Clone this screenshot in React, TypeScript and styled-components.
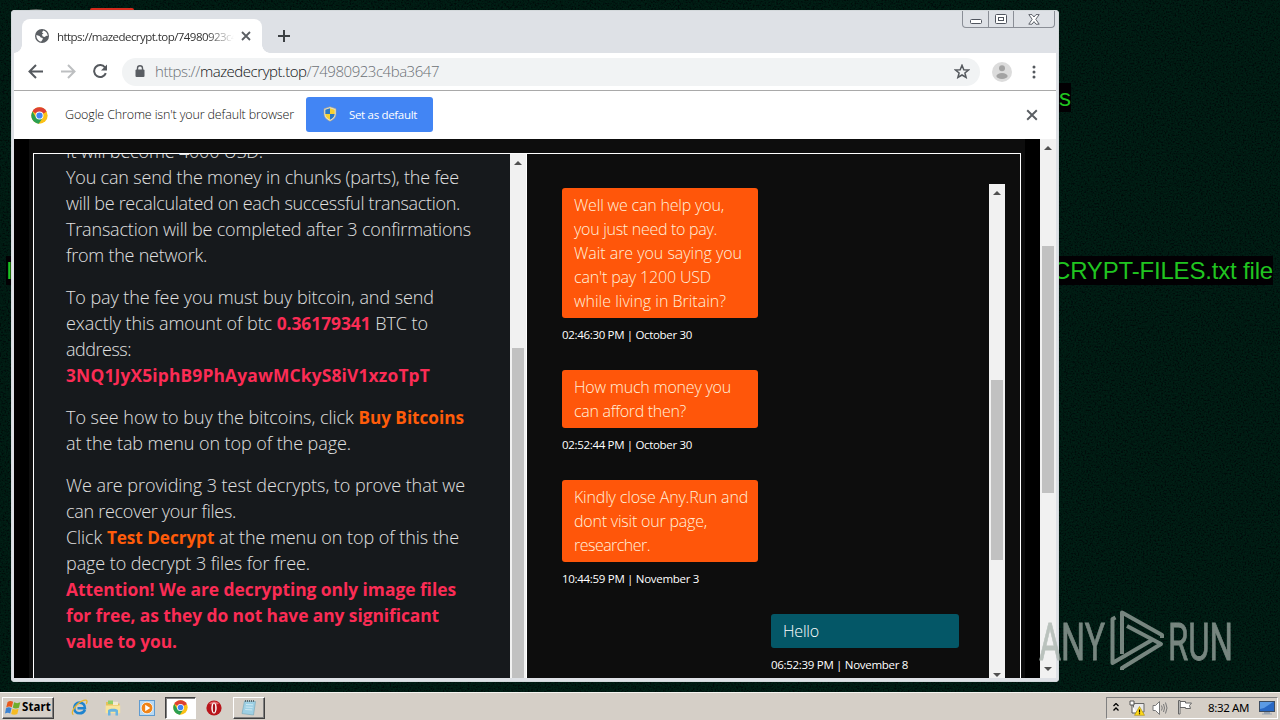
import { Fragment, useLayoutEffect, useRef, useState } from 'react'
import type { ReactNode } from 'react'
import styled, { createGlobalStyle, css } from 'styled-components'

const GlobalStyle = createGlobalStyle`
  * {
    box-sizing: border-box;
  }

  body {
    margin: 0;
    overflow: hidden;
    font-family: 'Open Sans', 'Noto Sans', sans-serif;
  }
`

const Desktop = styled.div`
  position: relative;
  display: flex;
  flex-direction: column;
  justify-content: flex-end;
  width: 1280px;
  height: 720px;
  overflow: hidden;
  background: #010f09;
`

const Grain = styled.svg`
  position: absolute;
  inset: 0;
  opacity: 0.09;
`

const Wallpaper = styled.div<{ $x: number; $y: number; $h: number }>`
  position: absolute;
  left: ${(p) => p.$x}px;
  top: ${(p) => p.$y}px;
  height: ${(p) => p.$h}px;
  line-height: ${(p) => p.$h}px;
  background: #020003;
  color: #20c420;
  font-family: 'Liberation Sans', Arial, sans-serif;
  font-size: 24px;
  white-space: nowrap;
`

const DesktopIcon = styled.div<{ $x: number; $y: number; $w: number; $color: string; $round?: boolean }>`
  position: absolute;
  left: ${(p) => p.$x}px;
  top: ${(p) => p.$y}px;
  width: ${(p) => p.$w}px;
  height: 16px;
  border-radius: ${(p) => (p.$round ? '50%' : '2px')};
  background: ${(p) => p.$color};
`

const Window = styled.div`
  position: absolute;
  left: 11px;
  top: 10px;
  display: flex;
  flex-direction: column;
  width: 1048px;
  height: 672px;
  padding: 1px 3px 4px;
  border-radius: 4px;
  background: #dee1e6;
  box-shadow: inset 0 0 0 1px #d3d8db;
`

const TabStrip = styled.div`
  display: flex;
  height: 42px;
  padding: 8px 0 0 8px;
`

const Tab = styled.div`
  position: relative;
  display: flex;
  align-items: center;
  width: 240px;
  height: 34px;
  padding: 0 11px 0 13px;
  border-radius: 8px 8px 0 0;
  background: #fff;
  color: #3c4043;

  &::before,
  &::after {
    content: '';
    position: absolute;
    bottom: 0;
    width: 8px;
    height: 8px;
  }

  &::before {
    left: -8px;
    background: radial-gradient(circle at 0 0, transparent 7.5px, #fff 8px);
  }

  &::after {
    right: -8px;
    background: radial-gradient(circle at 100% 0, transparent 7.5px, #fff 8px);
  }
`

const TabTitle = styled.div`
  width: 177px;
  margin: 0 7px 0 8px;
  overflow: hidden;
  font-size: 11.5px;
  color: #333;
  white-space: nowrap;
  mask-image: linear-gradient(to right, #000 150px, transparent 177px);
`

const NewTab = styled.div`
  display: flex;
  align-items: center;
  height: 34px;
  margin-left: 16px;
`

const Controls = styled.div`
  display: flex;
  height: 17px;
  margin: -8px 1px 0 auto;
  border: 1px solid #8a8e96;
  border-top: 0;
  border-radius: 0 0 4px 4px;
`

const Control = styled.div<{ $w: number }>`
  display: flex;
  align-items: center;
  justify-content: center;
  width: ${(p) => p.$w}px;

  & + & {
    border-left: 1px solid #8a8e96;
  }
`

const Toolbar = styled.div`
  display: flex;
  align-items: center;
  height: 37px;
  padding: 0 14px;
  background: #fff;
`

const NavIcon = styled.div<{ $gap: number }>`
  display: flex;
  width: 16px;
  margin-right: ${(p) => p.$gap}px;
`

const AddressBar = styled.div`
  display: flex;
  align-items: center;
  width: 858px;
  height: 28px;
  padding: 0 10px 0 12px;
  border-radius: 14px;
  background: #f1f3f4;
  font-size: 15px;
  font-weight: 300;
  color: #6b7075;
`

const Url = styled.div`
  flex: 1;
  margin: -2px 0 0 9px;

  em {
    font-style: normal;
    color: #101214;
  }
`

const Avatar = styled.div`
  display: flex;
  margin: 0 20px 0 12px;
`

const InfoBar = styled.div`
  display: flex;
  align-items: center;
  height: 49px;
  padding: 0 18px 0 17px;
  border-top: 1px solid #a9a9a9;
  background: #fff;
  font-size: 12.5px;
  font-weight: 300;
  color: #111;
`

const InfoText = styled.div`
  width: 229px;
  margin: -2px 0 0 17px;
`

const DefaultButton = styled.div`
  display: flex;
  align-items: center;
  width: 127px;
  height: 35px;
  margin: -2px auto 0 12px;
  padding-left: 16px;
  gap: 11px;
  border-radius: 3px;
  background: #4285f4;
  color: #fff;
  font-size: 11.5px;
  font-weight: 400;
`

const Page = styled.div`
  display: flex;
  height: 539px;
  background: #000;
`

const Site = styled.div`
  width: 996px;
  margin: 0 15px;
  padding: 14px 4px 0;
  background: #0d0d0d;
`

const Panels = styled.div`
  display: flex;
  height: 525px;
  border: 1px solid #fff;
  border-bottom: 0;
  overflow: hidden;
`

const Instructions = styled.div`
  width: 476px;
  height: 524px;
  overflow: hidden;
  padding-left: 32px;
  background: #16191c;
  color: #e0e0e0;
  font-size: 18px;
  font-weight: 300;
  line-height: 26px;

  > div:first-child {
    margin-top: -16px;
  }
`

const Paragraph = styled.div`
  margin-bottom: 16px;
`

const Line = styled.div`
  height: 1lh;
  white-space: nowrap;
`

const Danger = styled.b`
  font-size: 17.4px;
  font-weight: 700;
  color: #fb2c55;
`

const Accent = styled.b`
  font-size: 17.2px;
  font-weight: 700;
  color: #ff5c0a;
`

const Chat = styled.div`
  display: flex;
  flex: 1;
  padding-top: 30px;
  border-left: 1px solid #fff;
`

const Messages = styled.div`
  width: 432px;
  padding: 4px 0 0 35px;
`

const Message = styled.div<{ $mine?: boolean }>`
  width: ${(p) => (p.$mine ? 188 : 196)}px;
  margin-bottom: 23px;
  ${(p) =>
    p.$mine &&
    css`
      margin-left: auto;
    `}
`

const Bubble = styled.div<{ $mine?: boolean }>`
  padding: 5px 12px;
  border-radius: 3px;
  background: ${(p) => (p.$mine ? '#045767' : '#ff560a')};
  color: ${(p) => (p.$mine ? '#fff' : '#fff1dc')};
  font-size: 16px;
  font-weight: 300;
  line-height: 24px;
`

const Stamp = styled.div`
  margin-top: 5px;
  color: #fff;
  font-size: 11.5px;
  line-height: 24px;
`

const Track = styled.div<{ $h: number; $ml?: number }>`
  display: flex;
  flex-direction: column;
  align-items: center;
  flex: none;
  width: 16px;
  height: ${(p) => p.$h}px;
  margin-left: ${(p) => p.$ml ?? 0}px;
  background: #f1f1f1;
`

const Thumb = styled.div<{ $top: number; $h: number }>`
  width: 12px;
  height: ${(p) => p.$h}px;
  margin-top: ${(p) => p.$top}px;
  background: #c1c1c1;
`

const Arrow = styled.div<{ $down?: boolean; $mt: number }>`
  width: 0;
  height: 0;
  margin-top: ${(p) => p.$mt}px;
  border: 4px solid transparent;
  ${(p) => (p.$down ? 'border-top-color: #505050; border-bottom: 0;' : 'border-bottom-color: #505050; border-top: 0;')}
`

const Watermark = styled.svg`
  position: absolute;
  left: 1036px;
  top: 606px;
`

const Taskbar = styled.div`
  position: relative;
  display: flex;
  align-items: center;
  height: 28px;
  padding: 3px 2px 1px;
  border-top: 1px solid #f4f2ee;
  background: #d5cfc7;
  font-family: 'DejaVu Sans', sans-serif;
`

const TaskButton = styled.div<{ $w: number; $ml?: number; $pressed?: boolean }>`
  display: flex;
  align-items: center;
  justify-content: center;
  width: ${(p) => p.$w}px;
  height: 22px;
  margin-left: ${(p) => p.$ml ?? 0}px;
  border: 1px solid;
  border-color: ${(p) => (p.$pressed ? '#404040 #fff #fff #404040' : '#fff #404040 #404040 #fff')};
  background: ${(p) => (p.$pressed ? '#fff' : '#d5cfc7')};
  box-shadow: ${(p) => (p.$pressed ? 'inset 1px 1px #808080' : 'inset -1px -1px #808080')};
  font-size: 11.5px;
  font-weight: 700;
`

const StartLabel = styled.div`
  width: 29px;
  margin: -2px 0 0 1px;
  font-family: 'Noto Sans', sans-serif;
`

const QuickIcon = styled.div<{ $ml: number }>`
  display: flex;
  margin-left: ${(p) => p.$ml}px;
`

const Tray = styled.div`
  display: flex;
  align-items: center;
  width: 172px;
  height: 22px;
  margin-left: auto;
  padding-left: 6px;
  border: 1px solid;
  border-color: #808080 #fff #fff #808080;
`

const Clock = styled.div`
  width: 41px;
  margin: -1px 10px 0 15px;
  font-family: 'Noto Sans', sans-serif;
  font-size: 11.5px;
`

// tracks the letters out (or in) until the run is `width` pixels long
const Fit = ({ width, children }: { width: number; children: ReactNode }) => {
  const ref = useRef<HTMLSpanElement>(null)
  const [spacing, setSpacing] = useState(0)

  useLayoutEffect(() => {
    const el = ref.current
    if (!el) return
    const count = el.textContent?.length || 1
    setSpacing((width - el.getBoundingClientRect().width) / count)
  }, [width])

  return (
    <span ref={ref} style={{ display: 'inline-block', whiteSpace: 'nowrap', letterSpacing: spacing }}>
      {children}
    </span>
  )
}

const ChromeLogo = ({ size }: { size: number }) => (
  <svg width={size} height={size} viewBox="0 0 24 24">
    <circle cx="12" cy="12" r="11.5" fill="#fbc116" />
    <path d="M12 12 L2 6.2 A11.5 11.5 0 0 1 22 6.2 Z" fill="#dd4033" />
    <path d="M22 6.2 H12 V12 Z" fill="#dd4033" />
    <path d="M2 6.2 A11.5 11.5 0 0 0 11 23.5 L16.8 14.8 L12 12 L7 14.6 Z" fill="#2b9f51" />
    <circle cx="12" cy="12" r="5.6" fill="#fff" />
    <circle cx="12" cy="12" r="4.4" fill="#4285f4" />
  </svg>
)

const Shield = () => (
  <svg width="16" height="16" viewBox="0 0 16 16">
    <path d="M8 .8 L14 2.8 V7.5 C14 11.5 11 14 8 15.3 C5 14 2 11.5 2 7.5 V2.8 Z" fill="#e6e1cf" stroke="#a99d7c" strokeWidth=".6" />
    <path d="M8 2.2 L3.3 3.7 V8 H8 Z" fill="#2a78c6" />
    <path d="M8 2.2 L12.7 3.7 V8 H8 Z" fill="#f7d130" />
    <path d="M3.3 8 H8 V13.8 C5.5 12.6 3.5 10.7 3.3 8 Z" fill="#f7d130" />
    <path d="M12.7 8 H8 V13.8 C10.5 12.6 12.5 10.7 12.7 8 Z" fill="#2a78c6" />
  </svg>
)

const Globe = () => (
  <svg width="14" height="14" viewBox="0 0 14 14">
    <circle cx="7" cy="7" r="7" fill="#5a5e63" />
    <path d="M8.2 1.4 C11 2 12.7 4.2 12.7 7 L11 6.8 L10 8 L7.8 7.4 L6.8 5.5 L8.5 4.8 L7 3.5 Z" fill="#fff" />
    <path d="M1.4 6 L4.5 7 L5.8 8.4 L7.8 9 L7.5 10.8 L6.2 12.6 C3.4 12.3 1.2 9.6 1.4 6 Z" fill="#fff" />
  </svg>
)

const Cross = ({ size, width = 1.8 }: { size: number; width?: number }) => (
  <svg width={size} height={size} viewBox="0 0 10 10" fill="none" stroke="#5a5e63" strokeWidth={width}>
    <path d="M1 1 L9 9 M9 1 L1 9" />
  </svg>
)

const StartFlag = () => (
  <svg width="16" height="16" viewBox="0 0 16 16">
    <path d="M2.6 2 C4.5 .6 6.3 .7 8.1 1.8 L6.8 7.2 C5 6.1 3.2 6.1 1.2 7.4 Z" fill="#e9591d" />
    <path d="M9.1 2.3 C11 3.4 13 3.4 15.3 2.3 L13.9 7.7 C11.8 8.8 9.6 8.8 7.8 7.6 Z" fill="#6fae2c" />
    <path d="M1 8.3 C3 7 4.8 7.1 6.5 8.2 L5.2 13.4 C3.6 12.4 1.8 12.4 0 13.6 Z" fill="#3c83d2" />
    <path d="M7.5 8.7 C9.3 9.8 11.4 9.8 13.6 8.7 L12.3 13.9 C10.2 15 8 14.9 6.2 13.9 Z" fill="#f6bb22" />
  </svg>
)

const IeIcon = () => (
  <svg width="17" height="17" viewBox="0 0 17 17" fill="none">
    <path d="M14 10.8 C12.8 13.2 11 14.3 8.6 14.3 C5.4 14.3 3.2 12 3.2 9 C3.2 5.8 5.5 3.6 8.6 3.6 C11.9 3.6 14 5.8 13.9 9.2 H6.5" stroke="#1f84cf" strokeWidth="2.6" />
    <path d="M2.4 15.6 C-.3 14.6 2.4 8.7 6.8 4.9 C10.8 1.4 15.6 -.1 16 2.2 C16.1 3 15.8 4 15.3 4.8" stroke="#e7b52b" strokeWidth="1.3" />
  </svg>
)

const FolderIcon = () => (
  <svg width="16" height="17" viewBox="0 0 16 17">
    <path d="M1 3 H6 L7.5 4.6 H14.5 V14 H1 Z" fill="#e6c25a" />
    <path d="M3 1.5 H8 V5 H3 Z" fill="#8fcf68" />
    <path d="M8 2.8 H13 V6 H8 Z" fill="#f3ead0" />
    <path d="M.6 6.5 H15.2 V14.2 H.6 Z" fill="#f8e49b" />
    <path d="M3 16.5 V11.5 C3 9 13 9 13 11.5 V16.5 H10.5 V12.8 H5.5 V16.5 Z" fill="#68b4e0" />
  </svg>
)

const MediaIcon = () => (
  <svg width="16" height="16" viewBox="0 0 16 16">
    <rect x=".5" y=".5" width="15" height="15" fill="#b8d9f3" stroke="#5f9bd0" />
    <circle cx="8" cy="8" r="5.8" fill="#f08418" stroke="#fff" strokeWidth=".7" />
    <path d="M6.2 4.8 L11.2 8 L6.2 11.2 Z" fill="#fff" />
  </svg>
)

const OperaIcon = () => (
  <svg width="16" height="16" viewBox="0 0 16 16">
    <circle cx="8" cy="8" r="7.6" fill="#b9151b" />
    <path d="M3 3.4 C6 .7 10 .7 13 3.4 C11 5 5 5 3 3.4" fill="#e5686a" />
    <ellipse cx="8" cy="8" rx="2.7" ry="5.6" fill="#fff" />
    <ellipse cx="8" cy="8" rx="1.2" ry="4.6" fill="#a81218" />
  </svg>
)

const NotepadIcon = () => (
  <svg width="16" height="17" viewBox="0 0 16 17">
    <path d="M3.5 2 L14.5 2.5 L12.5 16 L1 14.6 Z" fill="#9ed0e4" stroke="#72a4b8" strokeWidth=".6" />
    <path d="M5 5.5 L12 5.8 M4.6 8 L11.6 8.4 M4.2 10.5 L11.2 10.9" stroke="#d8eef6" strokeWidth=".8" />
    <path d="M4 2 H14" stroke="#5d6d72" strokeWidth="2" strokeDasharray="1 1" />
  </svg>
)

const messages = [
  {
    lines: [
      ['Well we can help you,', 150],
      ['you just need to pay.', 143],
      ['Wait are you saying you', 168],
      ["can't pay 1200 USD", 137],
      ['while living in Britain?', 152],
    ],
    stamp: '02:46:30 PM | October 30',
    width: 130,
  },
  {
    lines: [
      ['How much money you', 157],
      ['can afford then?', 112],
    ],
    stamp: '02:52:44 PM | October 30',
    width: 130,
  },
  {
    lines: [
      ['Kindly close Any.Run and', 174],
      ['dont visit our page,', 133],
      ['researcher.', 76],
    ],
    stamp: '10:44:59 PM | November 3',
    width: 137,
  },
  { mine: true, lines: [['Hello', 36]], stamp: '06:52:39 PM | November 8', width: 137 },
] as { mine?: boolean; lines: [string, number][]; stamp: string; width: number }[]

const paragraphs: [ReactNode, number][][] = [
  [
    ['It will become 4000 USD.', 197],
    ['You can send the money in chunks (parts), the fee', 393],
    ['will be recalculated on each successful transaction.', 394],
    ['Transaction will be completed after 3 confirmations', 405],
    ['from the network.', 141],
  ],
  [
    ['To pay the fee you must buy bitcoin, and send', 368],
    [
      <>
        exactly this amount of btc <Danger>0.36179341</Danger> BTC to
      </>,
      362,
    ],
    ['address:', 65],
    [<Danger>3NQ1JyX5iphB9PhAyawMCkyS8iV1xzoTpT</Danger>, 364],
  ],
  [
    [
      <>
        To see how to buy the bitcoins, click <Accent>Buy Bitcoins</Accent>
      </>,
      398,
    ],
    ['at the tab menu on top of the page.', 285],
  ],
  [
    ['We are providing 3 test decrypts, to prove that we', 399],
    ['can recover your files.', 170],
    [
      <>
        Click <Accent>Test Decrypt</Accent> at the menu on top of this the
      </>,
      393,
    ],
    ['page to decrypt 3 files for free.', 244],
    [<Danger>Attention! We are decrypting only image files</Danger>, 390],
    [<Danger>for free, as they do not have any significant</Danger>, 373],
    [<Danger>value to you.</Danger>, 111],
  ],
]

const Browser = () => (
  <Window>
    <TabStrip>
      <Tab>
        <Globe />
        <TabTitle>
          <Fit width={180}>https://mazedecrypt.top/74980923c4</Fit>
        </TabTitle>
        <Cross size={10} />
      </Tab>
      <NewTab>
        <svg width="12" height="12" viewBox="0 0 12 12" stroke="#3c4043" strokeWidth="2">
          <path d="M6 0 V12 M0 6 H12" />
        </svg>
      </NewTab>
      <Controls>
        <Control $w={25}>
          <svg width="12" height="12" viewBox="0 0 12 12" fill="#fff" stroke="#50555e">
            <rect x=".5" y="6.5" width="11" height="4" rx="1" />
          </svg>
        </Control>
        <Control $w={25}>
          <svg width="12" height="10" viewBox="0 0 12 10" fill="#fff" stroke="#50555e">
            <rect x=".5" y=".5" width="11" height="9" rx="1" />
            <rect x="3.5" y="3.5" width="5" height="3" />
          </svg>
        </Control>
        <Control $w={41}>
          <svg width="12" height="11" viewBox="0 0 12 11" fill="#fff" stroke="#50555e" strokeWidth=".9">
            <path d="M.8 .6 H4 L6 3 L8 .6 H11.2 L7.8 5.3 L11.2 10.2 H8 L6 7.6 L4 10.2 H.8 L4.2 5.3 Z" />
          </svg>
        </Control>
      </Controls>
    </TabStrip>
    <Toolbar>
      <NavIcon $gap={16}>
        <svg width="16" height="16" viewBox="0 0 16 16" fill="none" stroke="#55595e" strokeWidth="2">
          <path d="M15 7.500 H2.5 M8 1 L1.5 7.500 L8 14" />
        </svg>
      </NavIcon>
      <NavIcon $gap={16}>
        <svg width="16" height="16" viewBox="0 0 16 16" fill="none" stroke="#bdbfc1" strokeWidth="2">
          <path d="M1 7.500 H13.5 M8 1 L14.5 7.500 L8 14" />
        </svg>
      </NavIcon>
      <NavIcon $gap={14}>
        <svg width="16" height="16" viewBox="0 0 16 16" fill="none">
          <path d="M13 3.500 A6 6 0 1 0 13.8 9.1" stroke="#55595e" strokeWidth="2" />
          <path d="M15 .5 V6.500 H9 Z" fill="#55595e" />
        </svg>
      </NavIcon>
      <AddressBar>
        <svg width="12" height="14" viewBox="0 0 12 14">
          <rect x="1.5" y="4.5" width="9" height="7.5" rx="1" fill="#5a5e63" />
          <path d="M3.5 5 V3.3 A2.5 2.5 0 0 1 8.5 3.3 V5" fill="none" stroke="#5a5e63" strokeWidth="1.4" />
        </svg>
        <Url>
          <Fit width={284}>
            https://<em>mazedecrypt.top</em>/74980923c4ba3647
          </Fit>
        </Url>
        <svg width="16" height="16" viewBox="0 0 16 16" fill="none" stroke="#55595e" strokeWidth="1.5">
          <path d="M8 1.3 L9.8 5.7 L14.5 6 L10.9 9 L12.1 13.5 L8 11 L3.9 13.5 L5.1 9 L1.5 6 L6.2 5.7 Z" />
        </svg>
      </AddressBar>
      <Avatar>
        <svg width="20" height="20" viewBox="0 0 20 20">
          <circle cx="10" cy="10" r="10" fill="#dcdcdc" />
          <circle cx="10" cy="6.3" r="3" fill="#a3a3a3" />
          <ellipse cx="10" cy="14" rx="5.6" ry="3" fill="#a3a3a3" />
        </svg>
      </Avatar>
      <svg width="4" height="14" viewBox="0 0 4 14" fill="#55595e">
        <circle cx="2" cy="2" r="1.5" />
        <circle cx="2" cy="7" r="1.5" />
        <circle cx="2" cy="12" r="1.5" />
      </svg>
    </Toolbar>
    <InfoBar>
      <ChromeLogo size={17} />
      <InfoText>
        <Fit width={229}>Google Chrome isn't your default browser</Fit>
      </InfoText>
      <DefaultButton>
        <Shield />
        <Fit width={68}>Set as default</Fit>
      </DefaultButton>
      <Cross size={12} width={1.6} />
    </InfoBar>
    <Page>
      <Site>
        <Panels>
          <Instructions>
            {paragraphs.map((lines, i) => (
              <Paragraph key={i}>
                {lines.map(([text, width], j) => (
                  <Line key={j}>
                    <Fit width={width}>{text}</Fit>
                  </Line>
                ))}
              </Paragraph>
            ))}
          </Instructions>
          <Track $h={524}>
            <Arrow $mt={7} />
            <Thumb $top={183} $h={330} />
          </Track>
          <Chat>
            <Messages>
              {messages.map((m) => (
                <Message key={m.stamp} $mine={m.mine}>
                  <Bubble $mine={m.mine}>
                    {m.lines.map(([text, width]) => (
                      <Line key={text}>
                        <Fit width={width}>{text}</Fit>
                      </Line>
                    ))}
                  </Bubble>
                  <Stamp>
                    <Fit width={m.width}>{m.stamp}</Fit>
                  </Stamp>
                </Message>
              ))}
            </Messages>
            <Track $h={494} $ml={30}>
              <Arrow $mt={7} />
              <Thumb $top={185} $h={180} />
              <Arrow $down $mt={113} />
            </Track>
          </Chat>
        </Panels>
      </Site>
      <Track $h={539}>
        <Arrow $mt={7} />
        <Thumb $top={96} $h={247} />
        <Arrow $down $mt={174} />
      </Track>
    </Page>
  </Window>
)

const App = () => (
  <Fragment>
    <GlobalStyle />
    <Desktop>
      <Grain width="1280" height="720">
        <filter id="grain">
          <feTurbulence type="fractalNoise" baseFrequency="0.6" numOctaves="2" seed="4" />
          <feColorMatrix values="0 0 0 0 0  0 1.4 0 0 -0.45  0 0.6 0 0 -0.15  0 0 0 0 1" />
        </filter>
        <rect width="1280" height="720" filter="url(#grain)" />
      </Grain>
      <DesktopIcon $x={22} $y={9} $w={28} $color="#5d6662" $round />
      <DesktopIcon $x={90} $y={8} $w={44} $color="#d42a1c" />
      <Wallpaper $x={1059} $y={83} $h={29}>
        s
      </Wallpaper>
      <Wallpaper $x={6} $y={256} $h={29}>
        I
      </Wallpaper>
      <Wallpaper $x={1053} $y={256} $h={29}>
        <Fit width={220}>CRYPT-FILES.txt file</Fit>
      </Wallpaper>
      <Browser />
      <Watermark width="210" height="70" viewBox="1036 606 210 70" fill="#a5b0aa" opacity="0.72" fontFamily="Roboto, sans-serif" fontSize="52">
        <g stroke="#a5b0aa" strokeWidth=".8">
          <text x="1039" y="659.5" textLength="66" lengthAdjust="spacingAndGlyphs">
            ANY
          </text>
          <text x="1168" y="659.5" textLength="65" lengthAdjust="spacingAndGlyphs">
            RUN
          </text>
        </g>
        <g fill="none" stroke="#a5b0aa" strokeWidth="4" strokeLinejoin="round">
          <path d="M1122 654 V612.5 L1162 635 V638" />
          <path d="M1115.5 617.5 L1112.5 619 V663 L1152 640" />
          <path d="M1127 626 L1161 644 L1122 668 V670" />
        </g>
      </Watermark>
      <Taskbar>
        <TaskButton $w={52}>
          <StartFlag />
          <StartLabel>
            <Fit width={29}>Start</Fit>
          </StartLabel>
        </TaskButton>
        <QuickIcon $ml={17}>
          <IeIcon />
        </QuickIcon>
        <QuickIcon $ml={17}>
          <FolderIcon />
        </QuickIcon>
        <QuickIcon $ml={18}>
          <MediaIcon />
        </QuickIcon>
        <TaskButton $w={31} $ml={10} $pressed>
          <ChromeLogo size={15} />
        </TaskButton>
        <QuickIcon $ml={10}>
          <OperaIcon />
        </QuickIcon>
        <TaskButton $w={32} $ml={11}>
          <NotepadIcon />
        </TaskButton>
        <Tray>
          <svg width="6" height="10" viewBox="0 0 6 10" fill="none" stroke="#000" strokeWidth="1.3">
            <path d="M.5 3 L3 .5 L5.5 3 M.5 7.500 L3 5 L5.5 7.5" />
          </svg>
          <QuickIcon $ml={10}>
            <svg width="16" height="16" viewBox="0 0 16 16">
              <path d="M4.5 3.5 H15 V12 H4.5 Z" fill="#e9e9e9" stroke="#666" />
              <path d="M1 1 H5 V5 H1 Z M3 5 V13 H8" fill="#fff" stroke="#555" />
              <path d="M10.5 6.5 L15.5 15.3 H5.5 Z" fill="#ffd91a" stroke="#a68a08" strokeWidth=".6" />
              <path d="M10.5 9.5 V12.5 M10.5 13.3 V14.3" stroke="#000" strokeWidth="1.2" />
            </svg>
          </QuickIcon>
          <QuickIcon $ml={7}>
            <svg width="17" height="16" viewBox="0 0 17 16" fill="none" stroke="#777">
              <path d="M1 5.5 H3.5 L7.5 1.5 V14.5 L3.5 10.5 H1 Z" fill="#fff" />
              <path d="M9.5 5.5 Q11 8 9.5 10.5 M11.5 4 Q13.5 8 11.5 12 M13.5 2.5 Q16.5 8 13.5 13.5" />
            </svg>
          </QuickIcon>
          <QuickIcon $ml={8}>
            <svg width="16" height="16" viewBox="0 0 16 16" fill="#fff" stroke="#666">
              <path d="M3 1.5 H8.5 V3 H14.5 L12.5 5.5 L13.5 8.500 H8.5 V7.5 H3 Z" />
              <path d="M1.500 .5 H3 V14 H1.500 Z" />
            </svg>
          </QuickIcon>
          <Clock>
            <Fit width={41}>8:32 AM</Fit>
          </Clock>
          <svg width="16" height="14" viewBox="0 0 16 14">
            <rect x=".5" y=".5" width="15" height="10" fill="#2868c4" stroke="#3c4c60" />
            <path d="M1 1 H14 L5 7 L1 8 Z" fill="#5b9ae4" />
            <path d="M5 11 H11 V12.5 H13 V13.5 H3 V12.5 H5 Z" fill="#9aa4b0" />
          </svg>
        </Tray>
      </Taskbar>
    </Desktop>
  </Fragment>
)

export default App
